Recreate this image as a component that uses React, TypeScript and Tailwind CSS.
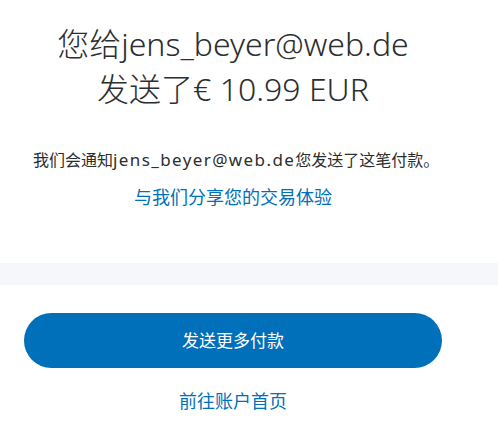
import React from 'react'

const sans = '"Noto Sans", "Noto Sans CJK SC", sans-serif'

export default function App() {
  return (
    <div className="min-h-[423px] w-full bg-white text-[#2c2e2f]" style={{ fontFamily: sans }}>
      <div className="ml-6 w-[418px] pt-[21px]">
        <h1 className="text-center text-[32px] font-light leading-[45px]">
          您给jens_beyer@web.de
          <br />
          发送了€ 10.99 EUR
        </h1>

        <p className="mt-[37px] pl-[9px] text-[16px] leading-6">
          我们会通知<span className="text-[17px] tracking-[1.4px]">jens_beyer@web.de</span>您发送了这笔付款。
        </p>

        <div className="mt-[13px] text-center">
          <a href="#" className="text-[18px] leading-6 text-[#0070ba]">
            与我们分享您的交易体验
          </a>
        </div>
      </div>

      <div className="mt-[53px] h-[22px] w-full bg-[#f5f7fa]" />

      <div className="ml-6 w-[418px] pt-[28px]">
        <button className="flex h-[55px] w-full items-center justify-center rounded-full bg-[#0070ba] text-[17px] text-white">
          发送更多付款
        </button>
        <div className="mt-[21px] text-center">
          <a href="#" className="text-[18px] leading-6 text-[#0070ba]">
            前往账户首页
          </a>
        </div>
      </div>
    </div>
  )
}
